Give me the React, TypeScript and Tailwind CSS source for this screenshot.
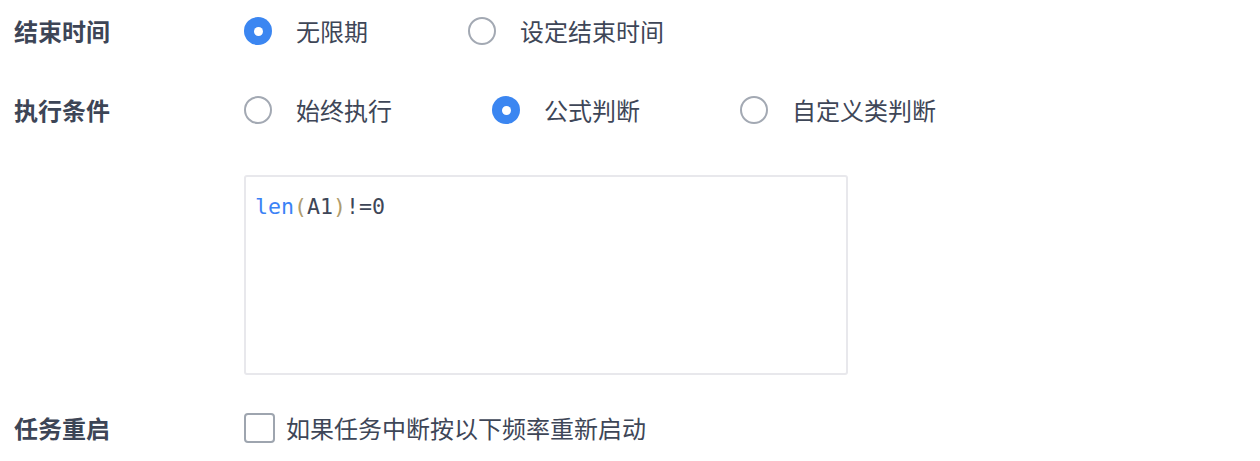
import { useState } from 'react';

const CJK = '"Noto Sans CJK SC", "Noto Sans", sans-serif';

function Radio({ checked, label, onClick }: { checked: boolean; label: string; onClick: () => void }) {
  return (
    <button type="button" onClick={onClick} className="mr-[100px] flex items-center">
      {checked ? (
        <span className="flex h-[28px] w-[28px] items-center justify-center rounded-full bg-[#3b86f1]">
          <span className="h-[9px] w-[9px] rounded-full bg-white" />
        </span>
      ) : (
        <span className="h-[28px] w-[28px] rounded-full border-2 border-[#a3a9b3] bg-white" />
      )}
      <span className="ml-[24px] text-[24px] leading-none text-[#3e4657]">{label}</span>
    </button>
  );
}

export default function App() {
  const [end, setEnd] = useState('forever');
  const [cond, setCond] = useState('formula');
  const [restart, setRestart] = useState(false);

  return (
    <div className="h-[461px] w-[1260px] bg-white pl-[14px]" style={{ fontFamily: CJK }}>
      <div className="flex h-[62px] items-center">
        <div className="w-[230px] text-[24px] font-bold leading-none text-[#3d4556]">结束时间</div>
        <Radio checked={end === 'forever'} label="无限期" onClick={() => setEnd('forever')} />
        <Radio checked={end === 'custom'} label="设定结束时间" onClick={() => setEnd('custom')} />
      </div>

      <div className="mt-[16px] flex h-[64px] items-center">
        <div className="w-[230px] text-[24px] font-bold leading-none text-[#3d4556]">执行条件</div>
        <Radio checked={cond === 'always'} label="始终执行" onClick={() => setCond('always')} />
        <Radio checked={cond === 'formula'} label="公式判断" onClick={() => setCond('formula')} />
        <Radio checked={cond === 'custom'} label="自定义类判断" onClick={() => setCond('custom')} />
      </div>

      <div className="ml-[230px] mt-[33px] h-[200px] w-[604px] rounded-[3px] border-2 border-[#e8e8ec] px-[9px] pt-[15px]">
        <div
          className="text-[21.6px] leading-[30px] text-[#3e4657]"
          style={{ fontFamily: '"DejaVu Sans Mono", monospace' }}
        >
          <span className="text-[#3b82f6]">len</span>
          <span className="text-[#b09c6c]">(</span>
          A1
          <span className="text-[#b09c6c]">)</span>
          !=0
        </div>
      </div>

      <div className="mt-[22px] flex h-[62px] items-center">
        <div className="w-[230px] text-[24px] font-bold leading-none text-[#3d4556]">任务重启</div>
        <button type="button" onClick={() => setRestart(!restart)} className="flex items-center">
          <span
            className={`h-[30px] w-[31px] rounded-[4px] border-2 ${
              restart ? 'border-[#3b86f1] bg-[#3b86f1]' : 'border-[#9ea5af] bg-white'
            }`}
          />
          <span className="ml-[11px] text-[24px] leading-none text-[#3e4657]">如果任务中断按以下频率重新启动</span>
        </button>
      </div>
    </div>
  );
}
